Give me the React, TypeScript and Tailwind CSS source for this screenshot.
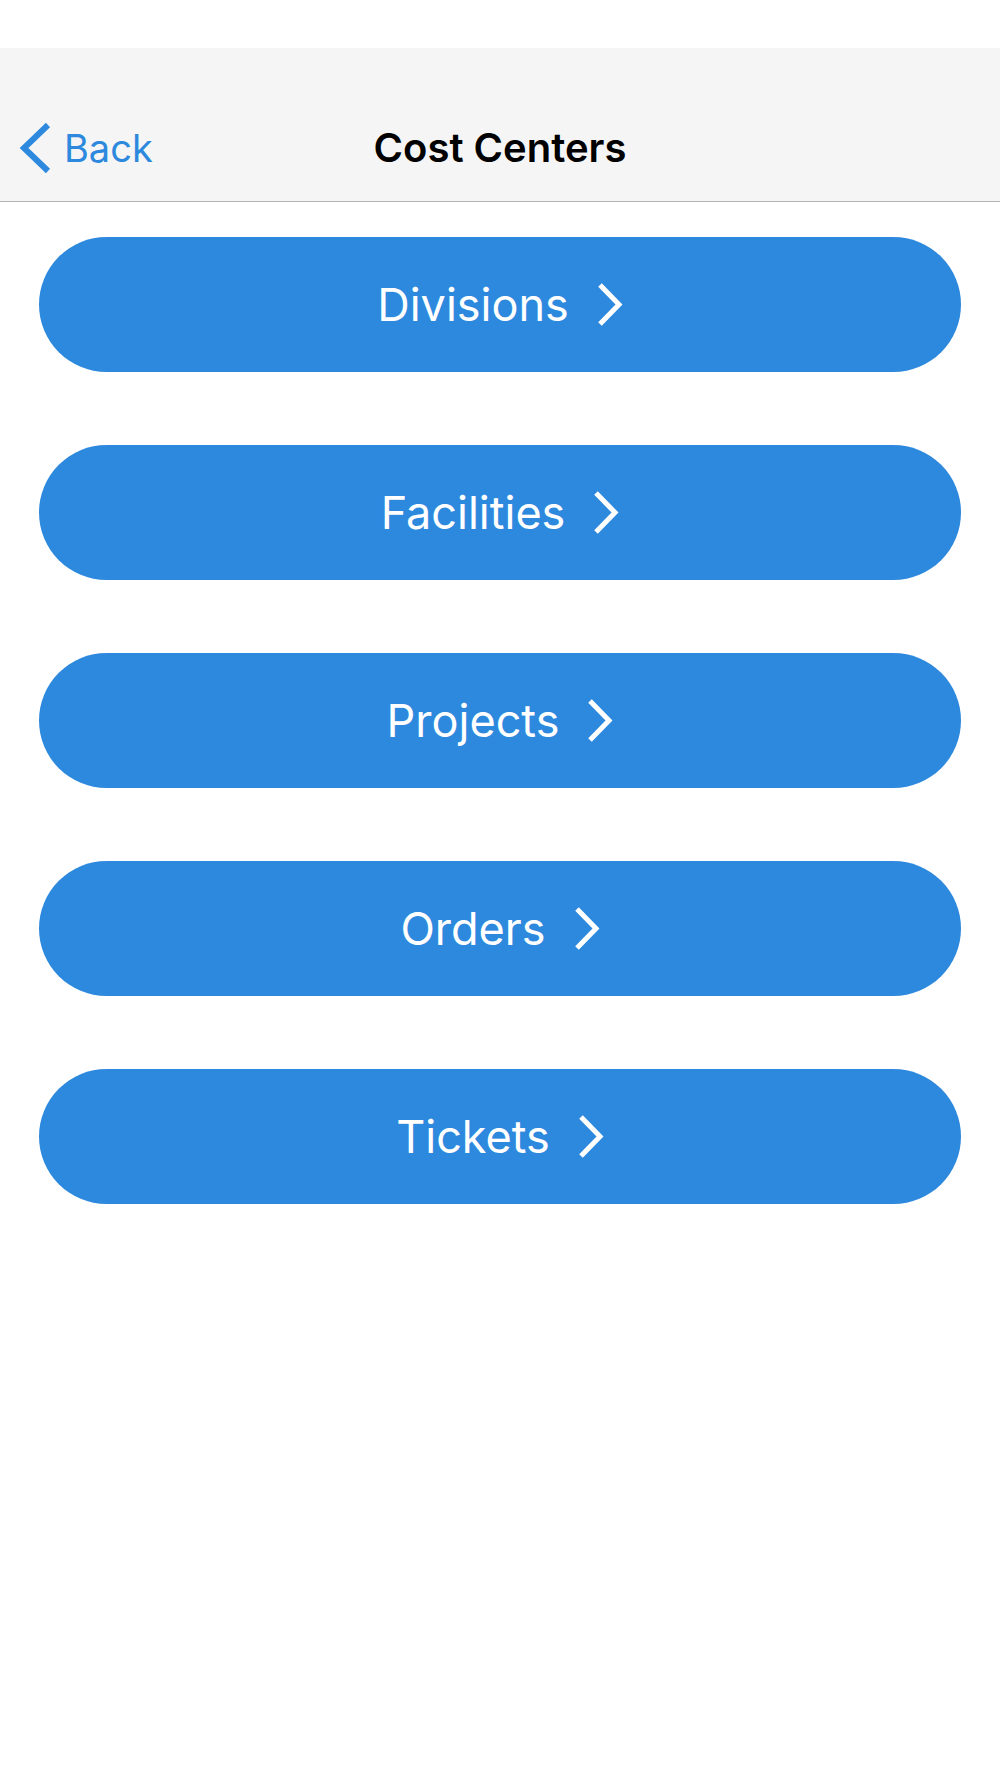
const items = ['Divisions', 'Facilities', 'Projects', 'Orders', 'Tickets'];

function Chevron() {
    return (
        <svg width="26" height="43" viewBox="0 0 26 43" className="shrink-0">
            <path d="M3 2 L22 21.5 L3 41" fill="none" stroke="white" strokeWidth="5" strokeLinejoin="miter" />
        </svg>
    );
}

export default function App() {
    return (
        <div className="min-h-[1778px] bg-white" style={{ fontFamily: 'Inter, "Noto Sans", sans-serif' }}>
            <div className="h-[48px] bg-white" />
            <header className="h-[154px] bg-[#f5f5f5] border-b border-[#b3b3b3] flex flex-col justify-end">
                <div className="relative h-[106px] flex items-center justify-center">
                    <button className="absolute left-[18px] top-1/2 -translate-y-1/2 flex items-center gap-[12px] text-[#2d89de]">
                        <svg width="34" height="52" viewBox="0 0 34 52">
                            <path d="M30 3 L6 26 L30 49" fill="none" stroke="#2d89de" strokeWidth="6" strokeLinejoin="miter" />
                        </svg>
                        <span className="text-[38px] leading-none">Back</span>
                    </button>
                    <h1 className="text-[40px] leading-none font-semibold text-black">Cost Centers</h1>
                </div>
            </header>
            <main className="px-[39px] pt-[35px] flex flex-col gap-[73px]">
                {items.map((label) => (
                    <button key={label} className="h-[135px] w-full rounded-full bg-[#2d89de] flex items-center justify-center gap-[28px] text-white">
                        <span className="text-[45px] leading-none">{label}</span>
                        <Chevron />
                    </button>
                ))}
            </main>
        </div>
    );
}
